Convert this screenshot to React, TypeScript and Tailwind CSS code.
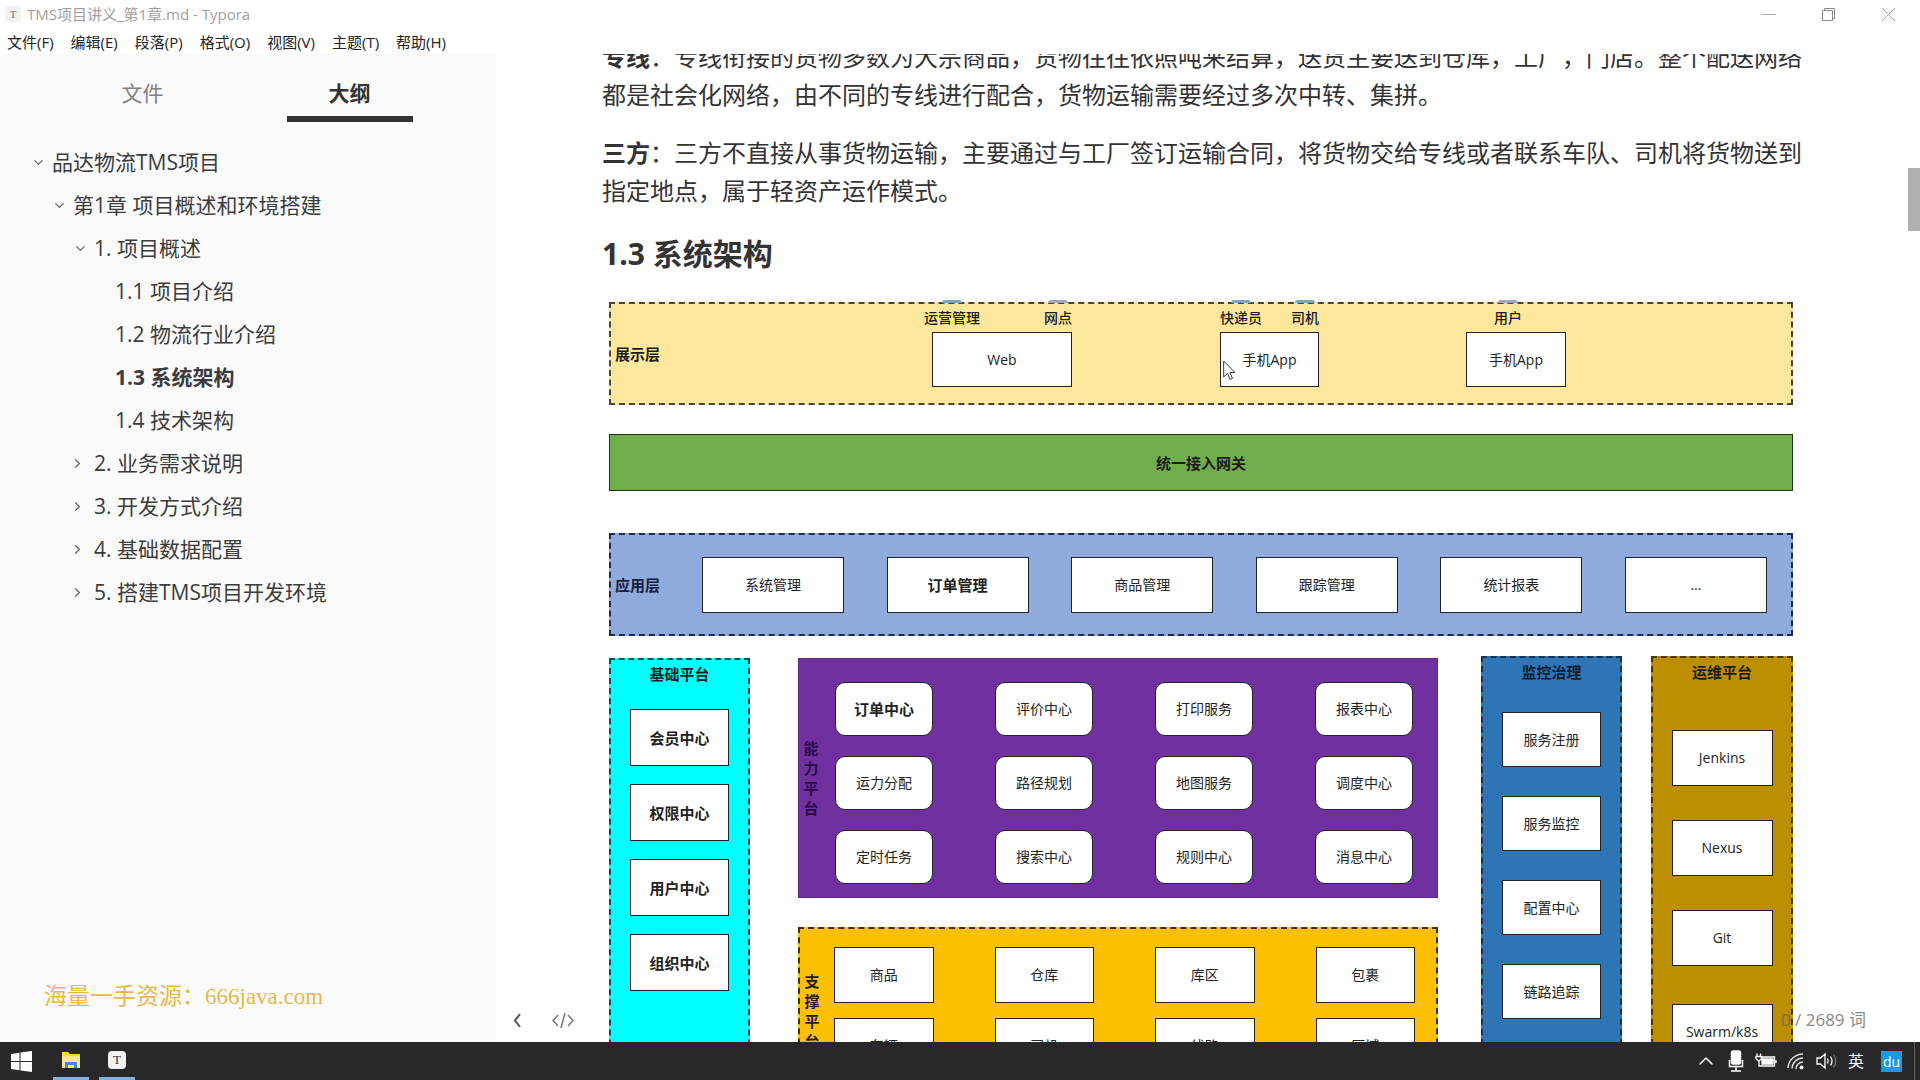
import React, { useState } from 'react';
import { ChevronDown, ChevronRight, ChevronUp } from 'lucide-react';

interface OutlineItem { level: 0 | 1 | 2 | 3; text: string; state: 'open' | 'closed' | 'leaf'; }

const MENUS = ['文件(F)', '编辑(E)', '段落(P)', '格式(O)', '视图(V)', '主题(T)', '帮助(H)'];

const OUTLINE: OutlineItem[] = [
    { level: 0, text: '品达物流TMS项目', state: 'open' },
    { level: 1, text: '第1章 项目概述和环境搭建', state: 'open' },
    { level: 2, text: '1. 项目概述', state: 'open' },
    { level: 3, text: '1.1 项目介绍', state: 'leaf' },
    { level: 3, text: '1.2 物流行业介绍', state: 'leaf' },
    { level: 3, text: '1.3 系统架构', state: 'leaf' },
    { level: 3, text: '1.4 技术架构', state: 'leaf' },
    { level: 2, text: '2. 业务需求说明', state: 'closed' },
    { level: 2, text: '3. 开发方式介绍', state: 'closed' },
    { level: 2, text: '4. 基础数据配置', state: 'closed' },
    { level: 2, text: '5. 搭建TMS项目开发环境', state: 'closed' },
];

const INDENT = ['pl-[31px]', 'pl-[52px]', 'pl-[73px]', 'pl-[94px]'];

const APPS = ['系统管理', '订单管理', '商品管理', '跟踪管理', '统计报表', '...'];
const BASE = ['会员中心', '权限中心', '用户中心', '组织中心'];
const CAPABILITY = ['订单中心', '评价中心', '打印服务', '报表中心', '运力分配', '路径规划', '地图服务', '调度中心', '定时任务', '搜索中心', '规则中心', '消息中心'];
const SUPPORT = ['商品', '仓库', '库区', '包裹', '车辆', '司机', '线路', '区域'];
const MONITOR = ['服务注册', '服务监控', '配置中心', '链路追踪'];
const OPS = ['Jenkins', 'Nexus', 'Git', 'Swarm/k8s'];

const Box = ({ text, className = '', bold = false }: { text: string; className?: string; bold?: boolean }) => (
    <div className={`flex shrink-0 items-center justify-center bg-white border border-[#222] text-[#222] ${bold ? 'font-bold text-[15px]' : 'text-[14px]'} ${className}`}>
        {text}
    </div>
);

// user group standing above a terminal, only the base of the figure is visible
const Person = ({ label, color = 'bg-[#7aa7bf]' }: { label: string; color?: string }) => (
    <div className="relative text-[14px] leading-5 font-medium whitespace-nowrap">
        <span className={`absolute left-1/2 -translate-x-1/2 -top-2 h-[3px] w-5 rounded-t ${color}`}></span>
        {label}
    </div>
);

const VerticalLabel = ({ text }: { text: string }) => (
    <div className="flex w-4 flex-col items-center text-[15px] leading-5 font-bold">
        {text.split('').map((c) => <span key={c}>{c}</span>)}
    </div>
);

const Diagram = () => (
    <div className="ml-[7px] mr-[9px] text-[#1c1c1c]">
        <div className="flex h-[103px] items-stretch bg-[#fce79c] border-2 border-dashed border-[#4a4632]">
            <div className="flex flex-1 items-center pl-1 text-[15px] font-bold">展示层</div>
            <div className="flex w-[148px] flex-col pt-1">
                <div className="flex justify-between"><Person label="运营管理" /><Person label="网点" color="bg-[#a3a4bd]" /></div>
                <Box text="Web" className="mt-1 ml-2 h-[55px]" />
            </div>
            <div className="ml-[148px] flex w-[99px] flex-col pt-1">
                <div className="flex justify-between"><Person label="快递员" /><Person label="司机" /></div>
                <Box text="手机App" className="mt-1 h-[55px]" />
            </div>
            <div className="ml-[147px] mr-[225px] flex w-[100px] flex-col pt-1">
                <div className="flex pl-7"><Person label="用户" color="bg-[#a3a4bd]" /></div>
                <Box text="手机App" className="mt-1 h-[55px]" />
            </div>
        </div>

        <div className="mt-[29px] flex h-[57px] items-center justify-center bg-[#70ad4b] border border-[#1f3314] text-[15px] leading-5 font-bold">统一接入网关</div>

        <div className="mt-[42px] flex h-[103px] items-center bg-[#8faadc] border-2 border-dashed border-[#1d2c4a]">
            <div className="w-[91px] pl-1 text-[15px] font-bold text-[#15203f]">应用层</div>
            <div className="flex flex-1 justify-between pr-6">
                {APPS.map((a) => <Box key={a} text={a} bold={a === '订单管理'} className="h-14 w-[142px]" />)}
            </div>
        </div>

        <div className="mt-5 flex h-[520px] items-stretch">
            <div className="mt-[2px] flex w-[141px] flex-col items-center gap-[18px] bg-[#00ffff] border-2 border-dashed border-[#1a4a5a]">
                <div className="mt-1 h-[27px] text-[15px] leading-5 font-bold">基础平台</div>
                {BASE.map((b) => <Box key={b} text={b} bold className="h-[57px] w-[99px]" />)}
            </div>

            <div className="mt-[2px] ml-12 flex flex-1 flex-col">
                <div className="flex h-[240px] items-center bg-[#7030a0] pl-1 pr-6 border border-[#5c2a8a]">
                    <div className="text-[#2a0845]"><VerticalLabel text="能力平台" /></div>
                    <div className="ml-4 grid flex-1 grid-cols-4 gap-x-[62px] gap-y-5 pt-[10px]">
                        {CAPABILITY.map((c) => <Box key={c} text={c} bold={c === '订单中心'} className="h-[54px] rounded-[10px] border-[#3d1263]" />)}
                    </div>
                </div>
                <div className="mt-[29px] flex flex-1 items-start bg-[#fdc000] pl-1 pr-[21px] border-2 border-b-0 border-dashed border-[#3f3206]">
                    <div className="pt-[42px]"><VerticalLabel text="支撑平台" /></div>
                    <div className="ml-[14px] mt-[18px] grid flex-1 grid-cols-4 gap-x-[61px] gap-y-[15px]">
                        {SUPPORT.map((s) => <Box key={s} text={s} className="h-14" />)}
                    </div>
                </div>
            </div>

            <div className="ml-[43px] flex w-[141px] flex-col items-center gap-[29px] bg-[#2e75b6] border-2 border-b-0 border-dashed border-[#16324f]">
                <div className="mt-1 h-[21px] text-[15px] leading-5 font-bold text-[#0b1d30]">监控治理</div>
                {MONITOR.map((m) => <Box key={m} text={m} className="h-[55px] w-[99px]" />)}
            </div>

            <div className="ml-[29px] flex w-[142px] flex-col items-center gap-[34px] bg-[#bc8f00] border-2 border-b-0 border-dashed border-[#4a3800]">
                <div className="mt-1 h-[34px] text-[15px] leading-5 font-bold">运维平台</div>
                {OPS.map((o) => <Box key={o} text={o} className="h-14 w-[101px] last:mt-1" />)}
            </div>
        </div>
    </div>
);

const Sidebar = () => {
    const [tab, setTab] = useState<'file' | 'outline'>('outline');
    const [current, setCurrent] = useState('1.3 系统架构');
    const tabs = [{ id: 'file', label: '文件' }, { id: 'outline', label: '大纲' }] as const;

    return (
        <aside className="relative flex w-[496px] shrink-0 flex-col bg-[#fafafa] text-[#3c3c3c]">
            <div className="flex pl-[39px] pr-[43px] pt-[19px]">
                {tabs.map((t) => (
                    <button key={t.id} onClick={() => setTab(t.id)} className={`flex flex-1 flex-col items-center text-[21px] leading-10 ${tab === t.id ? 'font-bold text-[#333]' : 'text-[#808080]'}`}>
                        {t.label}
                        <span className={`mt-[3px] h-[6px] w-[126px] ${tab === t.id ? 'bg-[#333]' : ''}`}></span>
                    </button>
                ))}
            </div>
            <nav className="mt-[19px] flex flex-col">
                {OUTLINE.map((item) => (
                    <a key={item.text} href="#" onClick={(e) => { e.preventDefault(); setCurrent(item.text); }} className={`flex h-[43px] items-center whitespace-nowrap text-[21px] ${INDENT[item.level]} ${current === item.text ? 'font-bold' : ''}`}>
                        <span className="w-[21px] shrink-0">
                            {item.state === 'open' && <ChevronDown size={15} strokeWidth={2} className="text-[#666]" />}
                            {item.state === 'closed' && <ChevronRight size={15} strokeWidth={2} className="-ml-[3px] text-[#666]" />}
                        </span>
                        {item.text}
                    </a>
                ))}
            </nav>
            <div className="absolute bottom-7 left-11 whitespace-nowrap text-[23px] text-[#e6b84c] font-['Liberation_Serif','Noto_Sans_CJK_SC',serif]">海量一手资源：666java.com</div>
        </aside>
    );
};

const TitleBar = () => (
    <header className="h-[54px] shrink-0">
        <div className="flex h-7 items-center pl-[5px] text-[#a0a0a0]">
            <span className="flex h-4 w-4 items-center justify-center bg-[#f2f2f2] text-[11px] text-[#777] font-['Liberation_Serif',serif]">T</span>
            <span className="ml-[6px] flex-1 text-[15px]">TMS项目讲义_第1章.md - Typora</span>
            <button aria-label="最小化" className="flex w-[60px] justify-center"><svg width="15" height="15" viewBox="0 0 15 15" stroke="#aaa"><path d="M0 7.5h15" /></svg></button>
            <button aria-label="还原" className="flex w-[60px] justify-center"><svg width="13" height="13" viewBox="0 0 13 13" fill="none" stroke="#888"><path d="M.5 2.5h10v10H.5zM2.500 2.500V.5h10v10h-2" /></svg></button>
            <button aria-label="关闭" className="flex w-[60px] justify-center"><svg width="13" height="13" viewBox="0 0 13 13" stroke="#aaa"><path d="M0 0l13 13M13 0L0 13" /></svg></button>
            <span className="w-[2px]"></span>
        </div>
        <div className="flex h-7 items-center gap-[17px] pl-[7px] text-[15px] text-[#222]">
            {MENUS.map((m) => <button key={m}>{m}</button>)}
        </div>
    </header>
);

const Taskbar = () => (
    <footer className="flex h-[38px] shrink-0 items-center bg-[#28282a] text-white">
        <button aria-label="开始" className="ml-[11px] w-[42px]">
            <svg width="21" height="21" viewBox="0 0 21 21" fill="#fff"><path d="M0 3l8.500-1.200v8.200H0zM9.500 1.600L21 0v10H9.500zM0 11h8.500v8.200L0 18zM9.500 11H21v10L9.500 19.400z" /></svg>
        </button>
        <button aria-label="文件资源管理器" className="flex h-full w-9 flex-col items-center justify-end">
            <svg width="20" height="18" viewBox="0 0 20 18" className="mb-2"><path d="M1 1h6l2 2h10v14H1z" fill="#f2d64e" /><path d="M1 5h18v12H1z" fill="#fbe983" /><path d="M4 17v-6h12v6h-3v-3H7v3z" fill="#3c8fd0" /></svg>
            <span className="h-[3px] w-full bg-[#7fb2e0]"></span>
        </button>
        <button aria-label="Typora" className="ml-[10px] flex h-full w-9 flex-col items-center justify-end">
            <span className="mb-2 flex h-[18px] w-[18px] items-center justify-center rounded-sm bg-[#f2f2f2] text-[13px] text-[#333] font-['Liberation_Serif',serif]">T</span>
            <span className="h-[3px] w-full bg-[#7fb2e0]"></span>
        </button>
        <div className="ml-auto flex h-full items-center">
            <button aria-label="显示隐藏的图标" className="flex w-[30px] justify-center"><ChevronUp size={24} strokeWidth={1.5} /></button>
            <svg className="w-[30px]" height="22" viewBox="0 0 30 22" fill="none" stroke="#fff" strokeWidth="1.500"><rect x="10.500" y="1" width="9" height="13" rx="2" fill="#fff" /><path d="M8.500 10v6.500h13V10M15 17v4M10 21h10" /></svg>
            <svg className="w-[30px]" height="22" viewBox="0 0 30 22" fill="none" stroke="#fff" strokeWidth="1.300"><path d="M10 7h13.500v9H8v-5M25 10v3" /><path d="M11 9h11v5H11z" fill="#fff" /><path d="M6 3.500v3M9.500 3.500v3M5 6.500h5.500v2.500l-2.700 2L5 9z" /></svg>
            <svg className="w-[30px]" height="22" viewBox="0 0 30 22" fill="none" stroke="#ddd" strokeWidth="1.500"><path d="M7 18A15 15 0 0 1 22 4M11 18.500A11 11 0 0 1 22 8M15 19a7 7 0 0 1 7-7" /><circle cx="20.500" cy="17.500" r="2" fill="#fff" stroke="none" /></svg>
            <svg className="w-[30px]" height="22" viewBox="0 0 30 22" fill="none" stroke="#fff" strokeWidth="1.300"><path d="M6 8h3.500L14 4v14l-4.500-4H6zM16.500 8.500q1.500 2.500 0 5M19.500 6.500q3 4.500 0 9" /><path d="M22.500 4.500q4.500 6.500 0 13" stroke="#777" /></svg>
            <button className="w-[30px] text-center text-[16px]">英</button>
            <button className="ml-[10px] flex h-[21px] w-[21px] items-center justify-center bg-[#149bea] text-[14px]">du</button>
            <span className="ml-3 mr-[5px] h-full w-px bg-[#666]"></span>
        </div>
    </footer>
);

export default function App() {
    return (
        <div className="flex h-screen flex-col overflow-hidden bg-white font-['Open_Sans','Noto_Sans_CJK_SC',sans-serif]">
            <TitleBar />
            <div className="flex min-h-0 flex-1">
                <Sidebar />
                <main className="relative flex min-w-0 flex-1 overflow-hidden">
                    <div className="min-w-0 flex-1">
                        <article className="mx-auto -mt-4 max-w-[1200px] text-[24px] leading-[38px] text-[#333]">
                            <p><strong>专线</strong>：专线衔接的货物多数为大宗商品，货物往往依照吨来结算，送货主要送到仓库，工厂，门店。整个配送网络都是社会化网络，由不同的专线进行配合，货物运输需要经过多次中转、集拼。</p>
                            <p className="mt-5"><strong>三方</strong>：三方不直接从事货物运输，主要通过与工厂签订运输合同，将货物交给专线或者联系车队、司机将货物送到指定地点，属于轻资产运作模式。</p>
                            <h3 className="mt-[25px] mb-[29px] text-[30px] font-bold">1.3 系统架构</h3>
                            <Diagram />
                        </article>
                    </div>
                    <div className="w-3 shrink-0 pt-[114px]"><div className="h-[63px] bg-[#b0b0b0]"></div></div>

                    <div className="absolute bottom-2 left-3 flex items-center text-[#666]">
                        <button aria-label="收起侧边栏" className="flex h-7 w-[18px] items-center justify-center"><svg width="8" height="15" viewBox="0 0 8 15" fill="none" stroke="#555" strokeWidth="2"><path d="M7 1L2 7.500 7 14" /></svg></button>
                        <button aria-label="源代码模式" className="ml-6 flex h-7 w-[26px] items-center justify-center"><svg width="22" height="15" viewBox="0 0 22 15" fill="none" stroke="#777" strokeWidth="1.500"><path d="M6 2L1 7.500 6 13M16 2l5 5.500-5 5.500M13 0L9 15" /></svg></button>
                    </div>
                    <div className="absolute right-[54px] bottom-2 text-[17px] leading-7 text-[#666]/80">0 / 2689 词</div>
                    <svg className="absolute top-[306px] left-[727px]" width="13" height="21" viewBox="0 0 13 21" fill="#fff" stroke="#333"><path d="M.7 1v16l3.800-3.600 2.600 6 2.400-1-2.600-5.900h5z" /></svg>
                </main>
            </div>
            <Taskbar />
        </div>
    );
}
